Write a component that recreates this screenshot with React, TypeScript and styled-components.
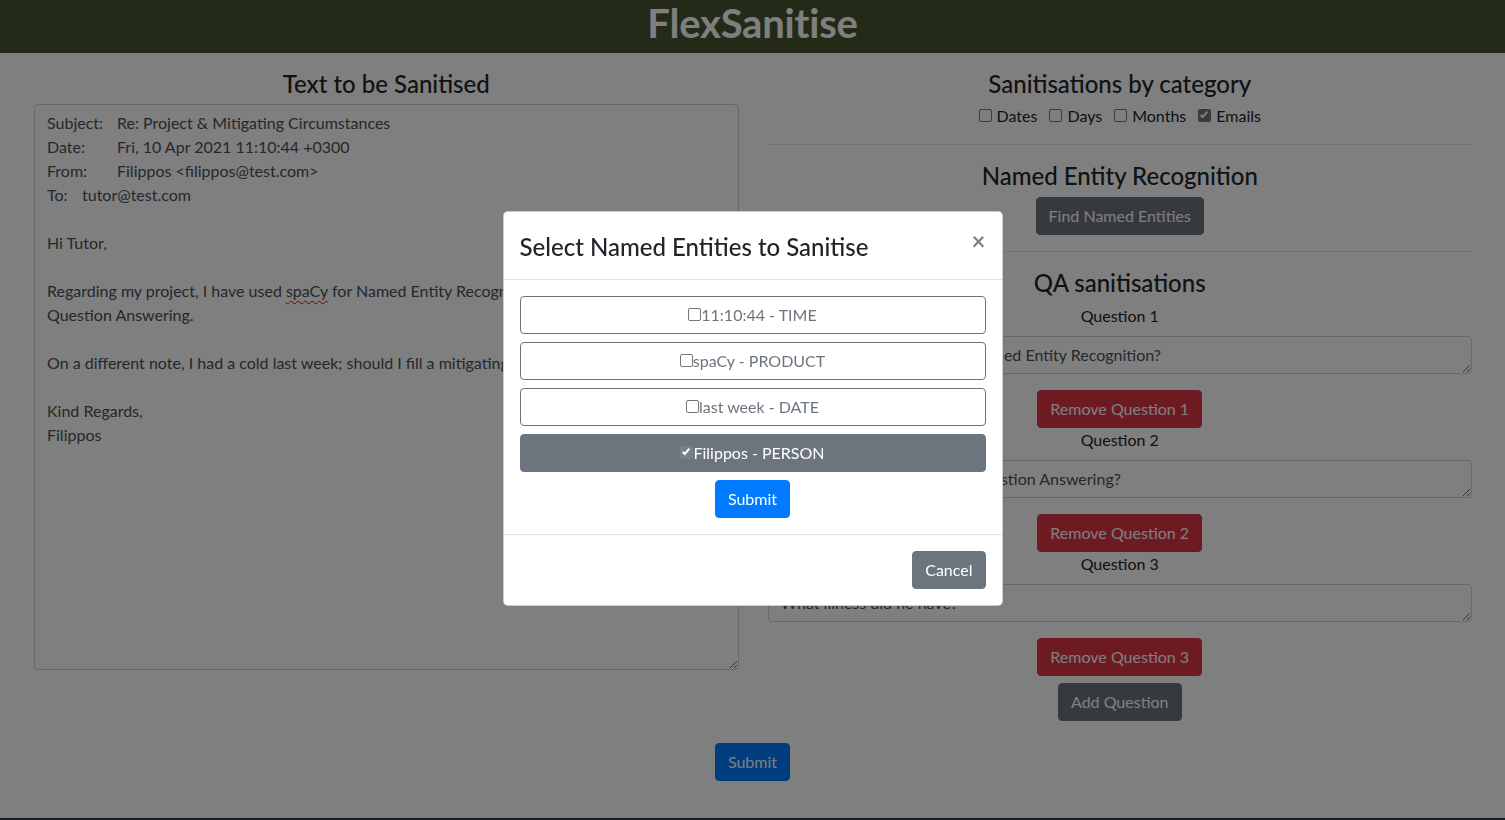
import React from "react";
import styled, { createGlobalStyle } from "styled-components";

const GlobalStyle = createGlobalStyle`
  html, body { margin: 0; padding: 0; }
  body {
    font-family: Lato, "Noto Sans", sans-serif;
    font-size: 16px;
    line-height: 1.5;
    color: #212529;
    background: #fff;
    overflow: hidden;
  }
  *, *::before, *::after { box-sizing: border-box; }
`;

const Page = styled.div`
  min-height: 820px;
  display: flex;
  flex-direction: column;
`;

const Header = styled.header`
  background: #465630;
  height: 53px;
  display: flex;
  align-items: flex-start;
  justify-content: center;
`;

const Brand = styled.h1`
  margin: 0;
  font-size: 40px;
  font-weight: 700;
  line-height: 46px;
  color: #fff;
  letter-spacing: -0.2px;
`;

const Columns = styled.main`
  display: grid;
  grid-template-columns: 1fr 1fr;
  column-gap: 29px;
  padding: 17px 33px 0 34px;
`;

const Column = styled.section`
  display: flex;
  flex-direction: column;
  align-items: center;
  min-width: 0;
`;

const Heading = styled.h4<{ $gap?: number }>`
  margin: 0 0 ${(p) => p.$gap ?? 5}px;
  font-size: 24px;
  font-weight: 500;
  line-height: 1.2;
  text-align: center;
`;

const EmailBox = styled.div`
  width: 100%;
  height: 566px;
  padding: 6px 12px;
  border: 1px solid #ced4da;
  border-radius: 4px;
  white-space: pre-wrap;
  tab-size: 35px;
  overflow: auto;
  resize: vertical;
  font-size: 16px;
  line-height: 24px;
  color: #495057;
`;

const Misspelt = styled.span`
  text-decoration: underline wavy #e00;
  text-decoration-thickness: 1px;
  text-underline-offset: 3px;
`;

const CheckRow = styled.div`
  display: flex;
  gap: 12px;
  margin: 0;
  height: 24px;
  align-items: center;
`;

const CheckLabel = styled.label`
  display: inline-flex;
  align-items: center;
  gap: 5px;
  font-size: 16px;
  line-height: 24px;
`;

const Box = styled.input.attrs({ type: "checkbox" })<{ $onDark?: boolean }>`
  appearance: none;
  width: 13px;
  height: 13px;
  margin: 0;
  border: 1px solid #767676;
  border-radius: 2px;
  background: #fff;
  position: relative;
  flex: none;
  &:checked {
    background: ${(p) => (p.$onDark ? "#7b8087" : "#767676")};
    border-color: ${(p) => (p.$onDark ? "#7b8087" : "#767676")};
  }
  &:checked::after {
    content: "";
    position: absolute;
    left: 3px;
    top: 0px;
    width: 4px;
    height: 8px;
    border: solid #fff;
    border-width: 0 2px 2px 0;
    transform: rotate(40deg);
  }
`;

const Rule = styled.hr`
  width: 100%;
  margin: 16px 0 17px;
  border: 0;
  border-top: 1px solid rgba(0, 0, 0, 0.1);
`;

type Variant = "danger" | "primary" | "secondary" | "outline";

const Button = styled.button<{ $variant: Variant }>`
  display: inline-block;
  font-family: inherit;
  font-size: 16px;
  line-height: 24px;
  padding: 6px 12px;
  border-radius: 4px;
  border: 1px solid transparent;
  cursor: pointer;
  ${(p) =>
    p.$variant === "danger"
      ? "background:#dc3545;border-color:#dc3545;color:#fff;"
      : p.$variant === "primary"
      ? "background:#007bff;border-color:#007bff;color:#fff;"
      : p.$variant === "secondary"
      ? "background:#6c757d;border-color:#6c757d;color:#fff;"
      : "background:#fff;border-color:#6c757d;color:#6c757d;"}
`;

const QuestionLabel = styled.label`
  display: block;
  margin: 0 0 8px;
  line-height: 24px;
`;

const QuestionInput = styled.textarea`
  display: block;
  width: 100%;
  height: 38px;
  padding: 6px 12px;
  font-family: inherit;
  font-size: 16px;
  line-height: 24px;
  color: #495057;
  border: 1px solid #ced4da;
  border-radius: 4px;
  resize: vertical;
  overflow: hidden;
  margin: 0 0 16px;
`;

const QuestionBlock = styled.div`
  width: 100%;
  display: flex;
  flex-direction: column;
  align-items: center;
`;

const AddRow = styled.div`
  margin-top: 7px;
`;

const SubmitRow = styled.div`
  display: flex;
  justify-content: center;
  padding: 22px 0 37px 0;
`;

const Footer = styled.footer`
  background: #343a40;
  color: #fff;
  height: 40px;
  font-size: 12px;
  padding: 4px 180px;
  margin-top: auto;
`;

const Backdrop = styled.div`
  position: fixed;
  inset: 0;
  background: rgba(0, 0, 0, 0.5);
  display: flex;
  align-items: center;
  justify-content: center;
`;

const Dialog = styled.div`
  width: 500px;
  background: #fff;
  border: 1px solid rgba(0, 0, 0, 0.2);
  border-radius: 5px;
  display: flex;
  flex-direction: column;
  margin-bottom: 4px;
`;

const DialogHeader = styled.div`
  display: flex;
  align-items: flex-start;
  padding: 17px 16px 14px;
  border-bottom: 1px solid #dee2e6;
`;

const DialogTitle = styled.h4`
  margin: 0;
  font-size: 24px;
  font-weight: 500;
  line-height: 36px;
`;

const Close = styled.button`
  margin: -16px -16px -16px auto;
  padding: 16px;
  background: transparent;
  border: 0;
  font-family: inherit;
  font-size: 24px;
  font-weight: 700;
  line-height: 1;
  color: #000;
  opacity: 0.5;
`;

const DialogBody = styled.div`
  padding: 16px;
  display: flex;
  flex-direction: column;
  gap: 8px;
`;

const EntityButton = styled(Button)`
  width: 100%;
  display: flex;
  justify-content: center;
  align-items: center;
`;

const Centered = styled.div`
  display: flex;
  justify-content: center;
`;

const DialogFooter = styled.div`
  display: flex;
  justify-content: flex-end;
  padding: 16px;
  border-top: 1px solid #dee2e6;
`;

const email = [
  "Subject:\tRe: Project & Mitigating Circumstances",
  "Date:\tFri, 10 Apr 2021 11:10:44 +0300",
  "From:\tFilippos <filippos@test.com>",
  "To:\ttutor@test.com",
  "",
  "Hi Tutor,",
  "",
];

const questions = [
  "What model did he use for Named Entity Recognition?",
  "What model did he use for Question Answering?",
  "What illness did he have?",
];

const entities = [
  { text: "11:10:44 - TIME", checked: false },
  { text: "spaCy - PRODUCT", checked: false },
  { text: "last week - DATE", checked: false },
  { text: "Filippos - PERSON", checked: true },
];

const categories = [
  { name: "Dates", checked: false },
  { name: "Days", checked: false },
  { name: "Months", checked: false },
  { name: "Emails", checked: true },
];

export default function App() {
  return (
    <>
      <GlobalStyle />
      <Page>
        <Header>
          <Brand>FlexSanitise</Brand>
        </Header>
        <Columns>
          <Column>
            <Heading>Text to be Sanitised</Heading>
            <EmailBox role="textbox">
              {email.join("\n") + "\n"}
              {"Regarding my project, I have used "}
              <Misspelt>spaCy</Misspelt>
              {" for Named Entity Recognition and BERT for\nQuestion Answering.\n\nOn a different note, I had a cold last week; should I fill a mitigating circumstances form?\n\nKind Regards,\nFilippos"}
            </EmailBox>
          </Column>
          <Column>
            <Heading $gap={5}>Sanitisations by category</Heading>
            <CheckRow>
              {categories.map((c) => (
                <CheckLabel key={c.name}>
                  <Box defaultChecked={c.checked} />
                  {c.name}
                </CheckLabel>
              ))}
            </CheckRow>
            <Rule />
            <Heading $gap={6}>Named Entity Recognition</Heading>
            <Button $variant="secondary">Find Named Entities</Button>
            <Rule />
            <Heading $gap={7}>QA sanitisations</Heading>
            {questions.map((q, i) => (
              <QuestionBlock key={i}>
                <QuestionLabel>Question {i + 1}</QuestionLabel>
                <QuestionInput rows={1} defaultValue={q} />
                <Button $variant="danger">Remove Question {i + 1}</Button>
              </QuestionBlock>
            ))}
            <AddRow>
              <Button $variant="secondary">Add Question</Button>
            </AddRow>
          </Column>
        </Columns>
        <SubmitRow>
          <Button $variant="primary">Submit</Button>
        </SubmitRow>
        <Footer>The FlexSanitise project, sanitising text with named entity recognition and question answering</Footer>
      </Page>
      <Backdrop>
        <Dialog role="dialog">
          <DialogHeader>
            <DialogTitle>Select Named Entities to Sanitise</DialogTitle>
            <Close aria-label="Close">×</Close>
          </DialogHeader>
          <DialogBody>
            {entities.map((e) => (
              <EntityButton key={e.text} $variant={e.checked ? "secondary" : "outline"}>
                <Box defaultChecked={e.checked} $onDark={e.checked} />
                {e.text}
              </EntityButton>
            ))}
            <Centered>
              <Button $variant="primary">Submit</Button>
            </Centered>
          </DialogBody>
          <DialogFooter>
            <Button $variant="secondary">Cancel</Button>
          </DialogFooter>
        </Dialog>
      </Backdrop>
    </>
  );
}
